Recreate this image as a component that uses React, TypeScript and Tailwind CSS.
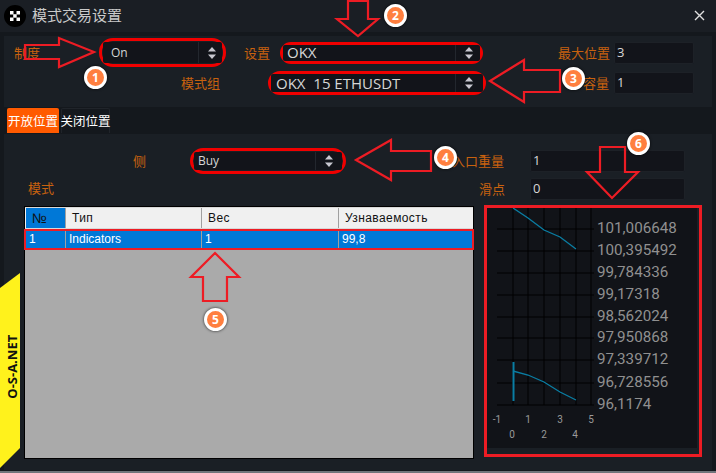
const cjk = "font-['Noto_Sans','Noto_Sans_CJK_SC',sans-serif]";
const label = "whitespace-nowrap text-[13px] leading-[22px] text-[#c8620f] font-['Noto_Sans_CJK_SC',sans-serif]";

function Spinner() {
  return (
    <div className="flex h-full w-[24px] shrink-0 items-center justify-center border-l border-[#23272e] pl-[3px]">
      <svg width="10" height="14" viewBox="0 0 10 14" fill="#c8c8d0">
        <path d="M5 1 9 5.5H1z" />
        <path d="M5 13 9 8.5H1z" />
      </svg>
    </div>
  );
}

function Select({ value, text = "text-[12px]", pad = "pl-[4px]" }: { value: string; text?: string; pad?: string }) {
  return (
    <div className={`flex h-full min-w-0 flex-1 items-center rounded-[2px] bg-[#12141a] ${pad}`}>
      <span className={`flex-1 whitespace-pre text-[#d6d6d6] font-['Open_Sans',sans-serif] ${text}`}>{value}</span>
      <Spinner />
    </div>
  );
}

function Field({ value, w }: { value: string; w: string }) {
  return (
    <div className={`flex h-[22px] items-center rounded-[2px] border border-[#1d2127] bg-[#12141a] pl-[2px] text-[13px] text-[#d6d6d6] font-['Open_Sans',sans-serif] ${w}`}>
      {value}
    </div>
  );
}

function Badge({ n, pos }: { n: number; pos: string }) {
  return (
    <div className={`absolute flex h-[23px] w-[23px] items-center justify-center rounded-full border-[3px] border-white bg-[#ff7f3f] text-[12px] font-bold text-white shadow-[0_0_3px_rgba(0,0,0,0.8)] font-['Open_Sans',sans-serif] ${pos}`}>
      {n}
    </div>
  );
}

function Arrows() {
  const arrows = [
    "25,45 59,45 59,38 94,52 59,67 59,59 25,59",
    "348,1 368,1 368,19 378,19 358,36 337,19 348,19",
    "490,81 524,60 524,70 560,70 560,92 524,92 524,102",
    "356,160 391,140 391,151 431,151 431,171 391,171 391,180",
    "215,253 239,277 227,277 227,301 203,301 203,277 191,277",
    "600,147 625,147 625,172 638,172 612,198 587,172 600,172",
  ];
  return (
    <svg className="pointer-events-none absolute inset-0" width="716" height="473" fill="none" stroke="#ed1c24" strokeWidth="2.2">
      {arrows.map((points) => (
        <polygon key={points} points={points} />
      ))}
    </svg>
  );
}

const gridX = [26, 41, 57, 73, 89, 104];
const gridY = [21, 43, 65, 87, 109, 130, 152, 175, 197];
const prices = ["101,006648", "100,395492", "99,784336", "99,17318", "98,562024", "97,950868", "97,339712", "96,728556", "96,1174"];

function Chart() {
  return (
    <svg width="212" height="246" className="block" fontFamily="Roboto, sans-serif">
      <rect x="0" y="0" width="210" height="240" fill="#111318" />
      {gridX.map((x) => (
        <line key={x} x1={x} y1="0" x2={x} y2="197" stroke="#000" />
      ))}
      {gridY.map((y) => (
        <line key={y} x1="10" y1={y} x2="107" y2={y} stroke="#000" />
      ))}
      <polyline points="26,0 41,10 57,22 73,29 89,41" fill="none" stroke="#0a7ea4" strokeWidth="1.3" />
      <polyline points="26,163 41,167 57,174 73,184 89,192" fill="none" stroke="#0a7ea4" strokeWidth="1.3" />
      <line x1="26.5" y1="154" x2="26.5" y2="193" stroke="#0a7ea4" strokeWidth="2" />
      {prices.map((p, i) => (
        <text key={p} x="110" y={gridY[i] + 4} fontSize="15.2" fill="#909090">
          {p}
        </text>
      ))}
      {[["-1", 10], ["1", 41], ["3", 73], ["5", 104]].map(([t, x]) => (
        <text key={t} x={x} y="215" fontSize="10" fill="#9a9a9a" textAnchor="middle">
          {t}
        </text>
      ))}
      {[["0", 25], ["2", 57], ["4", 88]].map(([t, x]) => (
        <text key={t} x={x} y="230" fontSize="10" fill="#9a9a9a" textAnchor="middle">
          {t}
        </text>
      ))}
    </svg>
  );
}

const columns = [
  { title: "Тип", cell: "Indicators", w: "w-[136px]" },
  { title: "Вес", cell: "1", w: "w-[137px]" },
  { title: "Узнаваемость", cell: "99,8", w: "flex-1" },
];

function PatternTable() {
  return (
    <div className="flex h-[253px] w-[450px] flex-col border border-black bg-[#aaaaaa] font-['Liberation_Sans',sans-serif] text-[12px]">
      <div className="flex h-[22px] items-stretch border-y border-[#d8d8d8] bg-[#f0f0f0] pl-[1px] text-[#111]">
        <div className="flex w-[39px] items-center bg-[#0078d7] pl-[6px] text-[14px] text-[#111]">№</div>
        {columns.map((c) => (
          <div key={c.title} className={`flex items-center border-l border-[#a0a0a0] pl-[6px] tracking-[0.4px] ${c.w}`}>
            {c.title}
          </div>
        ))}
      </div>
      <div className="-mx-[1px] flex h-[21px] items-stretch border-2 border-[#ed1c24] bg-[#0078d7] text-white">
        <div className="flex w-[39px] items-center pb-[2px] pl-[3px]">1</div>
        {columns.map((c) => (
          <div key={c.title} className={`flex items-center border-l border-[#a0a0a0] pb-[2px] pl-[3px] ${c.w}`}>
            {c.cell}
          </div>
        ))}
      </div>
    </div>
  );
}

export default function App() {
  return (
    <div className={`relative flex h-[473px] w-[716px] flex-col overflow-hidden bg-[#14181d] ${cjk}`}>
      {/* title bar */}
      <div className="flex h-[32px] shrink-0 items-center bg-[#1a1e24] pl-[4px] pr-[11px]">
        <svg width="22" height="22" viewBox="0 0 22 22">
          <circle cx="11" cy="11" r="11" fill="#000" />
          <g fill="#fff">
            <rect x="6" y="6" width="3.5" height="3.5" />
            <rect x="12.5" y="6" width="3.5" height="3.5" />
            <rect x="9.2" y="9.2" width="3.5" height="3.5" />
            <rect x="6" y="12.5" width="3.5" height="3.5" />
            <rect x="12.5" y="12.5" width="3.5" height="3.5" />
          </g>
        </svg>
        <span className="ml-[6px] flex-1 pb-[2px] text-[15px] text-[#c9c9c9] font-['Noto_Sans_CJK_SC',sans-serif]">模式交易设置</span>
        <svg width="11" height="11" viewBox="0 0 11 11" stroke="#e0e0e0" strokeWidth="1.4" className="mb-[2px]">
          <path d="M1 1l9 9M10 1l-9 9" />
        </svg>
      </div>

      {/* settings panel */}
      <div className="mx-[4px] mt-[4px] flex h-[71px] shrink-0 flex-col gap-[4px] bg-[#1a1f25] pt-[2px]">
        <div className="flex h-[29px] items-center">
          <span className={`ml-[10px] w-[85px] ${label}`}>制度</span>
          <div className="flex h-[29px] w-[127px] rounded-[14px] border-[3px] border-[#f00000] p-[1px]">
            <Select value="On" pad="pl-[8px]" />
          </div>
          <span className={`ml-[18px] w-[36px] ${label}`}>设置</span>
          <div className="flex h-[22px] w-[203px] rounded-[11px] border-[3px] border-[#f00000]">
            <Select value="OKX" text="text-[15px]" pad="pl-[4px] pr-[1px]" />
          </div>
          <span className={`ml-[75px] w-[52px] ${label}`}>最大位置</span>
          <Field value="3" w="ml-[4px] w-[80px]" />
        </div>
        <div className="flex h-[24px] items-center">
          <span className={`ml-[177px] w-[87px] ${label}`}>模式组</span>
          <div className="flex h-[24px] w-[218px] rounded-[12px] border-[3px] border-[#f00000]">
            <Select value="OKX  15 ETHUSDT" text="text-[15px]" pad="pl-[5px] pr-[4px]" />
          </div>
          <span className={`w-[123px] text-right ${label}`}>容量</span>
          <Field value="1" w="ml-[5px] w-[80px]" />
        </div>
      </div>

      {/* tabs */}
      <div className="ml-[7px] mt-[1px] flex h-[25px] shrink-0 gap-[2px] whitespace-nowrap text-[12.5px] leading-[25px] font-['Noto_Sans_CJK_SC',sans-serif]">
        <div className="w-[52px] rounded-t-[2px] bg-[#ff5a00] text-center text-white">开放位置</div>
        <div className="flex w-[49px] justify-center rounded-t-[2px] border border-b-0 border-[#20242a] bg-[#14181d] leading-[24px] text-white">关闭位置</div>
      </div>

      {/* position panel */}
      <div className="relative mx-[4px] mt-[1px] h-[336px] shrink-0 bg-[#1a1f25] pt-[14px]">
        <div className="flex h-[26px] items-center">
          <span className={`ml-[129px] w-[57px] ${label}`}>侧</span>
          <div className="flex h-[26px] w-[156px] rounded-[13px] border-[3px] border-[#f00000] p-[1px]">
            <Select value="Buy" pad="pl-[4px] pr-[3px]" />
          </div>
          <span className={`ml-[92px] w-[66px] text-right ${label}`}>入口重量</span>
          <Field value="1" w="ml-[26px] w-[155px]" />
        </div>
        <div className="mt-[4px] flex h-[22px] items-center">
          <span className={`-mt-[3px] ml-[24px] w-[451px] ${label}`}>模式</span>
          <span className={`w-[26px] ${label}`}>滑点</span>
          <Field value="0" w="ml-[25px] w-[155px]" />
        </div>
        <div className="mt-[6px] flex items-start pl-[20px]">
          <PatternTable />
          <div className="-mt-[1px] ml-[10px] h-[252px] w-[218px] border-[3px] border-[#ed1c24]">
            <Chart />
          </div>
        </div>
        <div className="absolute bottom-[2px] left-[-4px] flex h-[195px] w-[20px] items-center justify-center bg-[#fff21c] pb-[8px] pl-[5px] [clip-path:polygon(0_15px,100%_0,100%_175px,0_100%)]">
          <span className="-rotate-90 whitespace-nowrap text-[13px] font-bold text-[#111] font-['Open_Sans',sans-serif]">O-S-A.NET</span>
        </div>
      </div>

      <div className="mt-[1px] h-[2px] shrink-0 bg-[#70747a]" />

      <Arrows />
      <Badge n={1} pos="left-[84px] top-[66px]" />
      <Badge n={2} pos="left-[384px] top-[4px]" />
      <Badge n={3} pos="left-[562px] top-[67px]" />
      <Badge n={4} pos="left-[434px] top-[146px]" />
      <Badge n={5} pos="left-[204px] top-[308px]" />
      <Badge n={6} pos="left-[627px] top-[132px]" />
    </div>
  );
}
